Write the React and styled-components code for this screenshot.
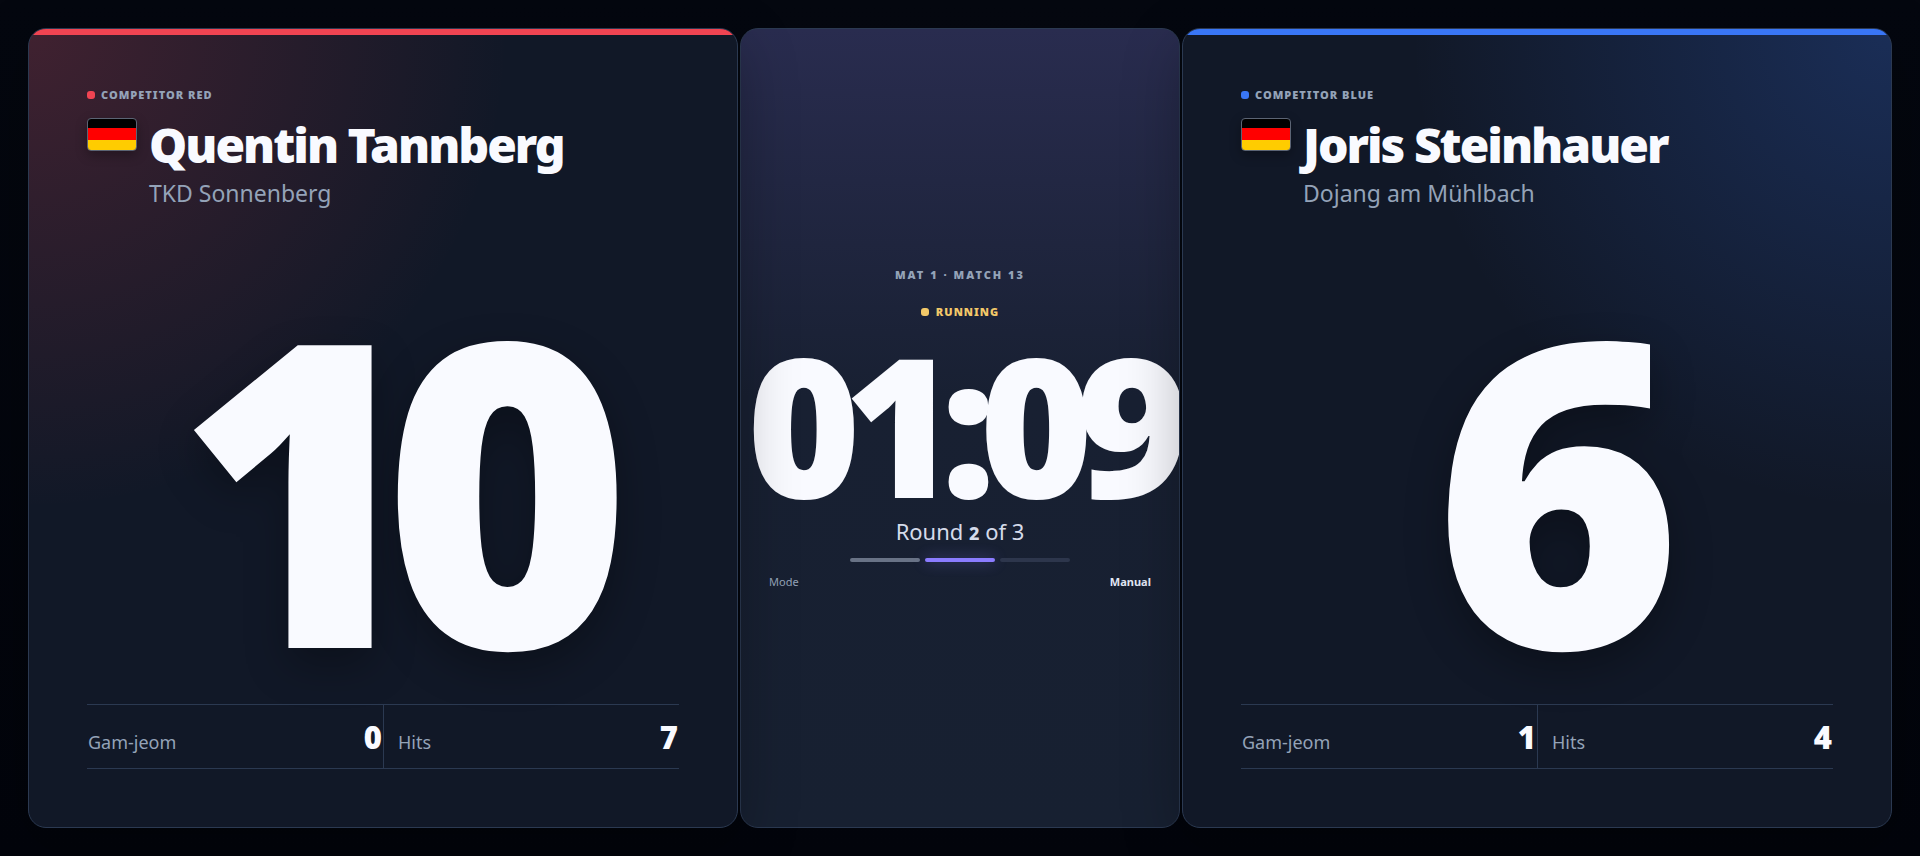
import styled, { createGlobalStyle } from 'styled-components';

const GlobalStyle = createGlobalStyle`
  * {
    box-sizing: border-box;
  }

  body {
    margin: 0;
    background: #04070f;
    color: #f9faff;
    font-family: 'Noto Sans', 'Open Sans', sans-serif;
  }
`;

const Board = styled.main`
  min-height: 100vh;
  padding: 28px;
  display: grid;
  grid-template-columns: minmax(0, 1fr) 440px minmax(0, 1fr);
  gap: 2px;
  background: linear-gradient(180deg, #04070f, #02040b);
`;

const Panel = styled.section`
  border: 1px solid #2b3951;
  border-radius: 18px;
  overflow: hidden;
  display: flex;
  flex-direction: column;
`;

// sits above the clock panel so its shadow falls on the clock
const CompetitorPanel = styled(Panel)`
  position: relative;
  z-index: 1;
  background:
    radial-gradient(circle at ${(p) => p.$origin}, ${(p) => p.$glow}, transparent 480px),
    #111827;
  box-shadow: 0 18px 60px rgba(0, 0, 0, 0.28);
`;

const Stripe = styled.div`
  height: 6px;
  background: ${(p) => p.$color};
`;

const CompetitorBody = styled.div`
  flex: 1;
  padding: 52px 58px 58px;
  display: flex;
  flex-direction: column;
`;

const Label = styled.div`
  display: flex;
  align-items: center;
  gap: 6px;
  font-size: 11px;
  line-height: 16px;
  font-weight: 900;
  letter-spacing: 1px;
  text-transform: uppercase;
  color: #94a3b8;
`;

const Dot = styled.span`
  width: 8px;
  height: 8px;
  border-radius: 3px;
  background: ${(p) => p.$color};
`;

const Identity = styled.div`
  margin-top: 15px;
  display: flex;
  align-items: flex-start;
  gap: 12px;
`;

const Flag = styled.span`
  flex: none;
  width: 50px;
  height: 33px;
  border: 1px solid #5b6474;
  border-radius: 4px;
  background: linear-gradient(#000 0 30%, #f00 30% 68%, #fc0 68%);
  box-shadow: 0 4px 12px rgba(0, 0, 0, 0.3);
`;

const Name = styled.h1`
  margin: 0;
  font-size: 48px;
  line-height: 53px;
  font-weight: 900;
  letter-spacing: -2px;
  white-space: nowrap;
`;

const Club = styled.p`
  margin: 6px 0 0;
  font-size: 23px;
  line-height: 32px;
  color: #94a3b8;
`;

const Score = styled.div`
  flex: 1;
  padding-top: 54px;
  display: flex;
  align-items: center;
  justify-content: center;
  font-size: 424px;
  line-height: 400px;
  font-weight: 900;
  letter-spacing: -42px;
  text-shadow: 0 16px 44px rgba(0, 0, 0, 0.3);
`;

const Stats = styled.dl`
  margin: 0;
  display: grid;
  grid-template-columns: 1fr 1fr;
  border-top: 1px solid #2b3951;
  border-bottom: 1px solid #2b3951;
`;

const Stat = styled.div`
  height: 63px;
  padding: 0 1px;
  display: flex;
  align-items: baseline;
  justify-content: space-between;
  line-height: 64px;

  & + & {
    padding-left: 14px;
    border-left: 1px solid #2b3951;
  }
`;

const StatName = styled.dt`
  font-size: 18px;
  color: #94a3b8;
`;

const StatValue = styled.dd`
  margin: 0;
  font-size: 31px;
  font-weight: 900;
`;

const ClockPanel = styled(Panel)`
  align-items: center;
  justify-content: center;
  background: linear-gradient(180deg, #292c4f, #182032 46%, #172031);
`;

const MatchLabel = styled(Label)`
  letter-spacing: 2px;
`;

const Status = styled(Label)`
  margin-top: 21px;
  gap: 7px;
  color: #f3c969;
`;

const Timer = styled.time`
  margin-top: 11px;
  font-size: 194px;
  line-height: 184px;
  font-weight: 900;
  letter-spacing: -17px;
`;

const Round = styled.p`
  margin: 0;
  font-size: 22px;
  line-height: 32px;
  color: #d5dbea;
`;

const RoundNumber = styled.strong`
  font-size: 18px;
  font-weight: 800;
`;

const Segments = styled.div`
  width: 220px;
  margin-top: 9px;
  display: grid;
  grid-template-columns: repeat(3, 1fr);
  gap: 5px;
`;

const Segment = styled.span`
  height: 4px;
  border-radius: 2px;
  background: ${(p) => p.$color};
  box-shadow: ${(p) => (p.$active ? '0 0 14px rgba(139, 124, 255, 0.45)' : 'none')};
`;

const Mode = styled.div`
  align-self: stretch;
  margin-top: 12px;
  padding: 0 28px;
  display: flex;
  justify-content: space-between;
  font-size: 11px;
  line-height: 16px;
  color: #94a3b8;
`;

const ModeValue = styled.span`
  font-weight: 700;
  color: #e2e8f5;
`;

function Competitor({ side, color, glow, origin, name, club, score, gamJeom, hits }) {
  return (
    <CompetitorPanel $glow={glow} $origin={origin}>
      <Stripe $color={color} />
      <CompetitorBody>
        <Label>
          <Dot $color={color} />
          Competitor {side}
        </Label>
        <Identity>
          <Flag role="img" aria-label="Germany" />
          <div>
            <Name>{name}</Name>
            <Club>{club}</Club>
          </div>
        </Identity>
        <Score>{score}</Score>
        <Stats>
          <Stat>
            <StatName>Gam-jeom</StatName>
            <StatValue>{gamJeom}</StatValue>
          </Stat>
          <Stat>
            <StatName>Hits</StatName>
            <StatValue>{hits}</StatValue>
          </Stat>
        </Stats>
      </CompetitorBody>
    </CompetitorPanel>
  );
}

export default function App() {
  return (
    <>
      <GlobalStyle />
      <Board>
        <Competitor
          side="Red"
          color="#f04452"
          glow="rgba(240, 68, 82, 0.21)"
          origin="0 0"
          name="Quentin Tannberg"
          club="TKD Sonnenberg"
          score={10}
          gamJeom={0}
          hits={7}
        />
        <ClockPanel>
          <MatchLabel>Mat 1 · Match 13</MatchLabel>
          <Status>
            <Dot $color="#f3c969" />
            Running
          </Status>
          <Timer>01:09</Timer>
          <Round>
            Round <RoundNumber>2</RoundNumber> of 3
          </Round>
          <Segments>
            <Segment $color="#697386" />
            <Segment $color="#8b7cff" $active />
            <Segment $color="#2d364c" />
          </Segments>
          <Mode>
            <span>Mode</span>
            <ModeValue>Manual</ModeValue>
          </Mode>
        </ClockPanel>
        <Competitor
          side="Blue"
          color="#3976f6"
          glow="rgba(57, 118, 246, 0.23)"
          origin="100% 0"
          name="Joris Steinhauer"
          club="Dojang am Mühlbach"
          score={6}
          gamJeom={1}
          hits={4}
        />
      </Board>
    </>
  );
}
